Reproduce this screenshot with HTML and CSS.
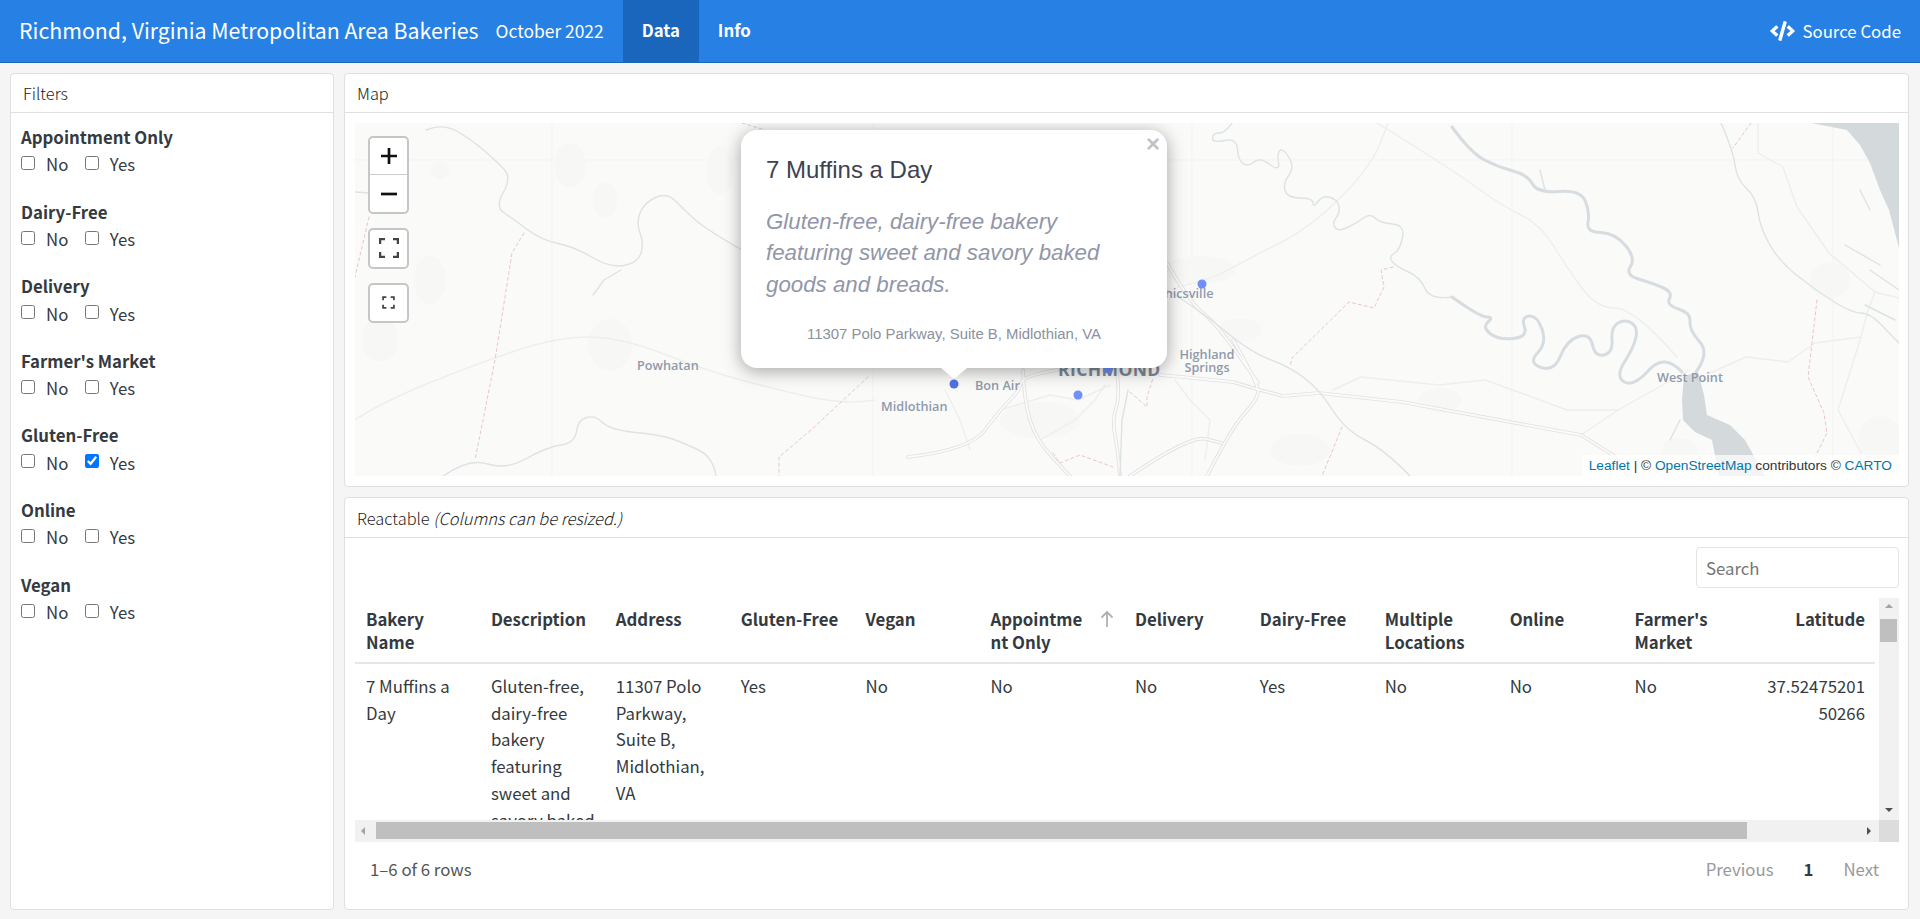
FILE: index.html
```html
<!DOCTYPE html>
<html>
<head>
  <title>Richmond, Virginia Metropolitan Area Bakeries</title>
  <link rel="stylesheet" href="styles.css">
</head>
<body>
  <nav class="navbar">
    <span class="brand">Richmond, Virginia Metropolitan Area Bakeries</span>
    <span class="subtitle">October 2022</span>
    <a class="nav-link active">Data</a>
    <a class="nav-link">Info</a>
    <a class="source-link">
      <svg class="source-icon" viewBox="0 0 640 512"><path d="M278.9 511.5l-61-17.7c-6.4-1.8-10-8.5-8.2-14.9L346.2 8.7c1.8-6.4 8.5-10 14.9-8.2l61 17.7c6.4 1.8 10 8.5 8.2 14.9L293.8 503.3c-1.9 6.4-8.5 10.1-14.9 8.2zm-114-112.2l43.5-46.4c4.6-4.9 4.3-12.7-.8-17.2L117 256l90.6-79.7c5.1-4.5 5.5-12.3.8-17.2l-43.5-46.4c-4.5-4.8-12.1-5.1-17-.5L3.8 247.2c-5.1 4.7-5.1 12.8 0 17.5l144.1 135.1c4.9 4.6 12.5 4.4 17-.5zm327.2.6l144.1-135.1c5.1-4.7 5.1-12.8 0-17.5L492.1 112.1c-4.8-4.5-12.4-4.3-17 .5L431.6 159c-4.6 4.9-4.3 12.7.8 17.2L523 256l-90.6 79.7c-5.1 4.5-5.5 12.3-.8 17.2l43.5 46.4c4.5 4.9 12.1 5.1 17 .6z"/></svg>
      Source Code
    </a>
  </nav>

  <main class="layout">
    <!-- Filters -->
    <section class="card sidebar">
      <div class="card-header">Filters</div>
      <div class="card-body filters">
        <div class="filter-group">
          <div class="filter-label">Appointment Only</div>
          <div class="filter-options">
            <label class="option"><input type="checkbox"> No</label>
            <label class="option"><input type="checkbox"> Yes</label>
          </div>
        </div>
        <div class="filter-group">
          <div class="filter-label">Dairy-Free</div>
          <div class="filter-options">
            <label class="option"><input type="checkbox"> No</label>
            <label class="option"><input type="checkbox"> Yes</label>
          </div>
        </div>
        <div class="filter-group">
          <div class="filter-label">Delivery</div>
          <div class="filter-options">
            <label class="option"><input type="checkbox"> No</label>
            <label class="option"><input type="checkbox"> Yes</label>
          </div>
        </div>
        <div class="filter-group">
          <div class="filter-label">Farmer's Market</div>
          <div class="filter-options">
            <label class="option"><input type="checkbox"> No</label>
            <label class="option"><input type="checkbox"> Yes</label>
          </div>
        </div>
        <div class="filter-group">
          <div class="filter-label">Gluten-Free</div>
          <div class="filter-options">
            <label class="option"><input type="checkbox"> No</label>
            <label class="option"><input type="checkbox" checked> Yes</label>
          </div>
        </div>
        <div class="filter-group">
          <div class="filter-label">Online</div>
          <div class="filter-options">
            <label class="option"><input type="checkbox"> No</label>
            <label class="option"><input type="checkbox"> Yes</label>
          </div>
        </div>
        <div class="filter-group">
          <div class="filter-label">Vegan</div>
          <div class="filter-options">
            <label class="option"><input type="checkbox"> No</label>
            <label class="option"><input type="checkbox"> Yes</label>
          </div>
        </div>
      </div>
    </section>

    <div class="content">
      <!-- Map -->
      <section class="card map-card">
        <div class="card-header">Map</div>
        <div class="card-body map-body">
          <div class="map">
            <svg class="map-tiles" viewBox="355 123 1544 353">
              <g class="seams">
                <path d="M552 123V476M873 123V476M1192 123V476M1512 123V476M1833 123V476M355 160H1899"/>
              </g>
              <g class="forest">
                <ellipse cx="570" cy="165" rx="16" ry="22"/>
                <ellipse cx="605" cy="200" rx="12" ry="18"/>
                <ellipse cx="440" cy="170" rx="10" ry="9"/>
                <ellipse cx="610" cy="345" rx="22" ry="26"/>
                <ellipse cx="430" cy="280" rx="16" ry="24"/>
                <ellipse cx="380" cy="340" rx="18" ry="22"/>
                <ellipse cx="720" cy="170" rx="14" ry="24"/>
                <ellipse cx="1200" cy="270" rx="36" ry="14"/>
                <ellipse cx="1240" cy="330" rx="22" ry="12"/>
                <ellipse cx="1040" cy="420" rx="40" ry="18"/>
                <ellipse cx="1300" cy="450" rx="30" ry="16"/>
                <ellipse cx="1440" cy="400" rx="22" ry="12"/>
                <ellipse cx="1830" cy="280" rx="20" ry="18"/>
                <ellipse cx="1880" cy="440" rx="22" ry="24"/>
                <ellipse cx="1680" cy="450" rx="18" ry="12"/>
              </g>
              <g class="road-minor">
                <path d="M1178 287Q1210 280 1230 269T1280 243 1340 198 1379 146 1388 123"/>
                <path d="M1377 123Q1450 168 1476 187T1521 215 1553 245 1581 287 1615 308 1677 357"/>
                <path d="M1581 435L1618 410 1659 387 1690 370"/>
                <path d="M1710 373L1746 357 1788 362 1815 343 1861 337 1868 310 1875 292 1899 298"/>
                <path d="M1758 123V153L1783 167 1797 207 1829 253 1875 292"/>
                <path d="M1861 337L1838 410 1861 453"/>
                <path d="M1333 390L1361 377 1439 385 1485 380 1521 393 1567 410 1618 410"/>
                <path d="M355 420Q380 403 429 383T518 350 589 337 664 354 741 380 810 397 874 400"/>
                <path d="M1000 410L1050 395 1078 400 1110 385"/>
                <path d="M1040 440L1075 420 1095 400 1105 385"/>
                <path d="M945 390L960 420 970 450"/>
                <path d="M1175 380L1190 400 1210 420 1205 460"/>
              </g>
              <g class="road-main-base">
                <path id="roads" d="M908 457Q970 450 985 430T1010 400 1021 383 1057 370M1023 370Q1024 400 1030 420T1053 458 1070 476M1117 373Q1120 397 1116 408T1115 435 1120 476M1160 375L1183 377 1233 382 1260 390 1283 396 1319 393 1402 402 1581 435 1613 455 1630 476M1233 340Q1258 383 1258 391T1245 413 1207 476M1130 476Q1190 435 1206 439T1222 443M1167 263Q1190 303 1203 313T1237 353 1258 383"/>
              </g>
              <g class="road-main-top">
                <use href="#roads"/>
              </g>
              <g class="river">
                <path d="M355 192L369 193M426 130Q443 123 457.5 131.5T483.5 150 503.5 168.5 503.5 192 503.5 212.5 526.5 229 558 243.5 592.5 257.5 624 265.5 641 253 640 233 640 213 655.5 197.5 675.5 201 695.5 220 742 250"/>
                <path d="M621 270L604 280 593 295"/>
                <path d="M443 476Q469 458 487.5 464T526.5 458.5 561 445 576.5 431.5 586.5 417.5 602.5 422.5 635.5 432.5 672.5 439 698.5 450 716 476"/>
                <path d="M1232 123Q1225 133 1219 133T1212.5 138 1224.5 140.5 1237.5 149 1243 163.5 1254 162 1270 164.5 1278.5 162.5 1280 150.5 1289 157.5 1289 175 1285 190.5 1300 198 1313 203 1318 201.5 1330.5 197.5 1339 206.5 1336 218 1335 227.5 1347.5 227.5 1363.5 218 1375 218 1392.5 224 1402.5 237.5 1394 253.5 1392.5 262 1408.5 272 1425 288.5 1452 297"/>
                <path d="M1721 123Q1733 150 1735 165T1746.5 188.5 1758 212 1769 243.5 1796.5 275 1833.5 301.5 1861 313 1881.5 325 1899 343"/>
                <path d="M1167 290Q1200 310 1225 331T1270 359.5 1305 378.5 1332.5 410 1365 440 1410 476"/>
                <path d="M1540 170L1545 190M1680 420L1670 440"/>
                <path d="M1120 476L1122 420 1128 390"/>
                <path d="M1860 190L1870 210M1845 245L1880 265M1870 270L1899 290M1865 305L1895 320"/>
              </g>
              <g class="river-wide">
                <path d="M1452 127Q1471 153 1484.5 160T1513 171 1532.5 184 1559 191.5 1585.5 201.5 1588 222.5 1600.5 232.5 1625.5 245.5 1630.5 266.5 1638.5 279 1662.5 287.5 1669.5 298.5 1678.5 309 1690 321.5 1699.5 341.5 1696 372"/>
                <path d="M1452 297Q1480 317 1487 317T1488 322 1490 333.5 1513 338.5 1524.5 327 1529 316 1542 329 1537.5 353 1541 367.5 1560.5 356 1578.5 336.5 1592.5 345 1604 355 1612 340 1618 323 1631.5 323 1636 337 1624.5 362 1624.5 382 1649 370 1682 372"/>
              </g>
              <g class="water">
                <path d="M1684 376L1698 372 1704 395 1707 415 1730 425 1745 440 1765 476H1719L1712 440 1695 432 1683 420 1682 400Z"/>
                <path d="M1811 123L1847 130 1860 145 1870 163 1880 190 1889 210 1899 248V123Z"/>
              </g>
              <g class="boundary">
                <path d="M1751 123L1733 148M1817 300L1808 377 1824 413 1827 433 1815 457"/>
                <path d="M1393 267L1381 270 1384 287 1374 308 1349 302 1292 358 1290 367M1342 427L1322 476"/>
                <path d="M369 217L355 277M524 233L512 253 495 360 475 460M868 377L811 430 779 457V476"/>
                <path d="M1053 453L1060 463 1080 455 1113 467M1130 392L1147 407V397L1153 378M742 123L765 130"/>
              </g>
              <g class="labels">
                <text x="637" y="370">Powhatan</text>
                <text x="975" y="390">Bon Air</text>
                <text x="881" y="411">Midlothian</text>
                <text class="label-city" x="1058" y="376">RICHMOND</text>
                <text x="1124" y="298">Mechanicsville</text>
                <text class="label-mid" x="1207" y="359">Highland</text>
                <text class="label-mid" x="1207" y="372">Springs</text>
                <text x="1657" y="382">West Point</text>
              </g>
              <g class="markers">
                <circle cx="1078" cy="395" r="4.5"/>
                <circle cx="1202" cy="284" r="4.5"/>
                <circle cx="1108" cy="369" r="4.5"/>
                <circle class="marker-active" cx="954" cy="384" r="4.5"/>
              </g>
            </svg>

            <div class="map-controls">
              <div class="control zoom-control">
                <a class="zoom-btn zoom-in">
                  <svg viewBox="0 0 20 20"><path d="M10 2v16M2 10h16"/></svg>
                </a>
                <a class="zoom-btn">
                  <svg viewBox="0 0 20 20"><path d="M2 10h16"/></svg>
                </a>
              </div>
              <a class="control control-single">
                <svg class="frame-lg" viewBox="0 0 20 20"><path d="M1 6V1h5M14 1h5v5M19 14v5h-5M6 19H1v-5"/></svg>
              </a>
              <a class="control control-single">
                <svg class="frame-sm" viewBox="0 0 12 12"><path d="M1 4V1h3M8 1h3v3M11 8v3H8M4 11H1V8"/></svg>
              </a>
            </div>

            <div class="popup">
              <span class="popup-close">×</span>
              <div class="popup-title">7 Muffins a Day</div>
              <div class="popup-desc">Gluten-free, dairy-free bakery featuring sweet and savory baked goods and breads.</div>
              <div class="popup-address">11307 Polo Parkway, Suite B, Midlothian, VA</div>
              <div class="popup-tip"></div>
            </div>

            <div class="attribution"><a>Leaflet</a> | © <a>OpenStreetMap</a> contributors © <a>CARTO</a></div>
          </div>
        </div>
      </section>

      <!-- Reactable -->
      <section class="card table-card">
        <div class="card-header">Reactable <em>(Columns can be resized.)</em></div>
        <div class="card-body table-body">
          <div class="search-row">
            <input class="search" type="text" placeholder="Search">
          </div>
          <div class="rt-frame">
            <div class="rt-viewport">
              <table class="rt-table">
                <thead>
                  <tr>
                    <th class="col">Bakery Name</th>
                    <th class="col">Description</th>
                    <th class="col">Address</th>
                    <th class="col">Gluten-Free</th>
                    <th class="col">Vegan</th>
                    <th class="col col-sorted">
                      <div class="sort-head">
                        <span class="sort-label">Appointment Only</span>
                        <svg class="sort-icon" viewBox="0 0 14 18"><path d="M7 17V2M1.5 7.5L7 2l5.5 5.5"/></svg>
                      </div>
                    </th>
                    <th class="col">Delivery</th>
                    <th class="col">Dairy-Free</th>
                    <th class="col">Multiple Locations</th>
                    <th class="col">Online</th>
                    <th class="col">Farmer's Market</th>
                    <th class="col col-num">Latitude</th>
                  </tr>
                </thead>
                <tbody>
                  <tr>
                    <td>7 Muffins a Day</td>
                    <td>Gluten-free, dairy-free bakery featuring sweet and savory baked goods and breads.</td>
                    <td>11307 Polo Parkway, Suite B, Midlothian, VA</td>
                    <td>Yes</td>
                    <td>No</td>
                    <td>No</td>
                    <td>No</td>
                    <td>Yes</td>
                    <td>No</td>
                    <td>No</td>
                    <td>No</td>
                    <td class="col-num">37.5247520150266</td>
                  </tr>
                </tbody>
              </table>
            </div>
            <div class="vbar">
              <span class="arrow arrow-up"></span>
              <span class="vthumb"></span>
              <span class="arrow arrow-down"></span>
            </div>
            <div class="hbar">
              <span class="arrow arrow-left"></span>
              <span class="hthumb"></span>
              <span class="arrow arrow-right"></span>
            </div>
            <div class="bar-corner"></div>
          </div>
          <div class="pagination">
            <span class="page-info">1–6 of 6 rows</span>
            <div class="page-nav">
              <span class="page-btn">Previous</span>
              <span class="page-btn page-current">1</span>
              <span class="page-btn">Next</span>
            </div>
          </div>
        </div>
      </section>
    </div>
  </main>
</body>
</html>
```

FILE: styles.css
```css
* {
  box-sizing: border-box;
}

html, body {
  height: 100%;
  margin: 0;
  overflow: hidden;
}

body {
  background: #f5f5f5;
  color: #343a40;
  font-family: "Noto Sans CJK SC", "Open Sans", sans-serif;
  font-size: 16.8px;
  line-height: 1.5;
}

/* Navbar */
.navbar {
  display: flex;
  align-items: stretch;
  height: 63px;
  padding-left: 19px;
  background: #2780e3;
  border-bottom: 1px solid #1a66bd;
  color: #fff;
  line-height: 60px;
}

.brand {
  font-size: 21.3px;
}

.subtitle {
  margin-left: 17px;
  font-size: 17.4px;
  padding-top: 1px;
}

.nav-link {
  padding: 0 19px;
  font-size: 16.8px;
  font-weight: 700;
}

.nav-link.active {
  margin-left: 19px;
  background: #1a66bd;
}

.source-link {
  display: flex;
  align-items: center;
  gap: 8px;
  margin-left: auto;
  padding-right: 19px;
  font-size: 16.8px;
}

.source-icon {
  width: 25px;
  height: 20px;
  fill: #fff;
}

/* Page grid */
.layout {
  display: grid;
  grid-template-columns: 324px 1fr;
  gap: 10px;
  height: 847px;
  padding: 10px 11px 0 10px;
}

.content {
  display: flex;
  flex-direction: column;
  gap: 10px;
  min-width: 0;
}

.card {
  display: flex;
  flex-direction: column;
  background: #fff;
  border: 1px solid #dfdfdf;
  border-radius: 4px;
}

.card-header {
  flex: none;
  height: 39px;
  padding: 0 12px;
  border-bottom: 1px solid #dfdfdf;
  color: #222;
  font-size: 16.4px;
  line-height: 39px;
  font-weight: 300;
}

.card-header em {
  font-style: italic;
}

/* Filters */
.filters {
  padding: 13px 10px;
}

.filter-group {
  margin-bottom: 21.6px;
}

.filter-label {
  font-size: 16.8px;
  font-weight: 700;
  line-height: 22px;
}

.filter-options {
  display: flex;
  gap: 16.5px;
  height: 28px;
  margin-top: 3px;
  align-items: center;
}

.option {
  display: flex;
  align-items: center;
  gap: 11px;
  font-size: 16.8px;
}

.option input {
  width: 14px;
  height: 14px;
  margin: 0;
  position: relative;
  top: -2px;
}

/* Map */
.map-card {
  height: 414px;
}

.map-body {
  flex: 1;
  padding: 10px 9px 10px 10px;
}

.map {
  position: relative;
  height: 353px;
  background: #fafaf9;
  overflow: hidden;
  font-family: "Liberation Sans", Arial, sans-serif;
}

.map-tiles {
  display: block;
  width: 100%;
  height: 100%;
  fill: none;
  stroke-linecap: round;
  stroke-linejoin: round;
}

.seams {
  stroke: #f3f3f2;
  stroke-width: 1;
}

.forest {
  fill: #f7f8f6;
}

.road-minor {
  stroke: #eeeeec;
  stroke-width: 1.4;
}

.road-main-base {
  stroke: #e2e2e2;
  stroke-width: 3.6;
}

.road-main-top {
  stroke: #fbfbfb;
  stroke-width: 1.8;
}

.river {
  stroke: #dde3e5;
  stroke-width: 1.4;
}

.river-wide {
  stroke: #d6dcdf;
  stroke-width: 3;
}

.water {
  fill: #d4dadc;
}

.boundary {
  stroke: #e9c6ca;
  stroke-width: 1;
  stroke-dasharray: 3 3;
}

.labels text {
  fill: #8f9bab;
  font-family: "Open Sans", sans-serif;
  font-size: 12.7px;
  font-weight: 600;
}

.labels .label-city {
  fill: #7d8896;
  font-size: 17.5px;
  font-weight: 700;
  letter-spacing: .4px;
}

.labels .label-mid {
  text-anchor: middle;
}

.markers circle {
  fill: #6e8ffc;
}

.markers .marker-active {
  fill: #4f71e6;
}

.map-controls {
  position: absolute;
  top: 13px;
  left: 13px;
  display: flex;
  flex-direction: column;
  gap: 14px;
}

.control {
  display: block;
  width: 41px;
  background: #fff;
  border: 2px solid #c6c6c6;
  border-radius: 5px;
}

.zoom-btn {
  display: flex;
  align-items: center;
  justify-content: center;
  height: 37px;
}

.zoom-btn svg {
  width: 20px;
  height: 20px;
  fill: none;
  stroke: #111;
  stroke-width: 2.7;
}

.zoom-in {
  border-bottom: 1px solid #ccc;
}

.control-single {
  display: flex;
  align-items: center;
  justify-content: center;
  height: 40.5px;
}

.frame-lg, .frame-sm {
  fill: none;
  stroke: #444;
}

.frame-lg {
  width: 20px;
  height: 20px;
  stroke-width: 2.5;
}

.frame-sm {
  width: 13px;
  height: 13px;
  stroke-width: 1.6;
}

.popup {
  position: absolute;
  top: 7px;
  left: 386px;
  width: 426px;
  height: 238px;
  padding: 24px 25px 0;
  background: #fff;
  border-radius: 16px;
  box-shadow: 0 3px 18px rgba(0, 0, 0, .35);
}

.popup-close {
  position: absolute;
  top: 2px;
  right: 7px;
  color: #c3c3c3;
  font: bold 24px/24px "Liberation Sans", sans-serif;
}

.popup-title {
  color: #3d4250;
  font-size: 24px;
  line-height: 32px;
}

.popup-desc {
  margin-top: 19.5px;
  color: #9196a8;
  font-size: 22.3px;
  font-style: italic;
  line-height: 31.5px;
}

.popup-address {
  margin-top: 24px;
  color: #8b919e;
  font-size: 14.9px;
  line-height: 20px;
  text-align: center;
}

.popup-tip {
  position: absolute;
  left: 200px;
  bottom: -11px;
  width: 0;
  height: 0;
  border-top: 11px solid #fff;
  border-left: 13px solid transparent;
  border-right: 13px solid transparent;
}

.attribution {
  position: absolute;
  right: 0;
  bottom: 0;
  padding: 0 7px;
  background: rgba(255, 255, 255, .7);
  color: #333;
  font-size: 13.7px;
  line-height: 21px;
}

.attribution a {
  color: #0078a8;
}

/* Table */
.table-card {
  flex: 1;
  min-height: 0;
}

.table-card .card-header {
  height: 40px;
  line-height: 41px;
}

.table-body {
  flex: 1;
  display: flex;
  flex-direction: column;
  min-height: 0;
  padding: 9px 9px 0 10px;
}

.search-row {
  display: flex;
  justify-content: flex-end;
  height: 51px;
}

.search {
  width: 203px;
  height: 41px;
  padding: 0 9px;
  border: 1px solid #e4e4e4;
  border-radius: 4px;
  color: #343a40;
  font: inherit;
}

.search::placeholder {
  color: #757575;
}

.rt-frame {
  display: grid;
  grid-template-columns: 1fr 20px;
  grid-template-rows: 222px 22px;
  height: 244px;
}

.rt-viewport {
  overflow: hidden;
}

.rt-table {
  table-layout: fixed;
  width: 1519.5px;
  border-collapse: collapse;
}

.col, .rt-table td {
  padding: 0 10px 0 11px;
  overflow-wrap: anywhere;
  text-align: left;
  vertical-align: top;
}

.col {
  width: 124.9px;
  height: 65px;
  padding-top: 10px;
  border-bottom: 2px solid #e6e6e6;
  font-weight: 700;
  line-height: 23px;
}

.rt-table .col-sorted {
  width: 144.5px;
}

.rt-table .col-num {
  width: 126px;
  padding-right: 9.5px;
  text-align: right;
}

.rt-table td {
  padding-top: 9px;
  line-height: 26.7px;
}

.sort-head {
  display: flex;
  justify-content: space-between;
}

.sort-label {
  width: 96px;
}

.sort-icon {
  flex: none;
  width: 14px;
  height: 18px;
  margin-top: 2px;
  fill: none;
  stroke: #b0b0b0;
  stroke-width: 1.8;
}

.vbar, .hbar {
  position: relative;
  background: #f1f1f1;
}

.vthumb, .hthumb {
  position: absolute;
  background: #bfbfbf;
}

.vthumb {
  top: 21px;
  left: 1px;
  width: 17px;
  height: 23px;
}

.hthumb {
  top: 2px;
  left: 21px;
  width: 1371px;
  height: 17px;
}

.bar-corner {
  background: #dcdcdc;
}

.arrow {
  position: absolute;
  width: 0;
  height: 0;
  border: 4px solid transparent;
}

.arrow-up {
  top: 6px;
  left: 6px;
  border-top: 0;
  border-bottom-color: #a3a3a3;
}

.arrow-down {
  bottom: 8px;
  left: 6px;
  border-bottom: 0;
  border-top-color: #505050;
}

.arrow-left {
  top: 7px;
  left: 6px;
  border-left: 0;
  border-right-color: #a3a3a3;
}

.arrow-right {
  top: 7px;
  right: 8px;
  border-right: 0;
  border-left-color: #505050;
}

.pagination {
  display: flex;
  justify-content: space-between;
  align-items: center;
  height: 56px;
  padding: 0 20px 0 15px;
}

.page-info {
  color: #555;
}

.page-nav {
  display: flex;
  gap: 30px;
}

.page-btn {
  color: #999;
}

.page-current {
  color: #343a40;
  font-weight: 700;
}
```
